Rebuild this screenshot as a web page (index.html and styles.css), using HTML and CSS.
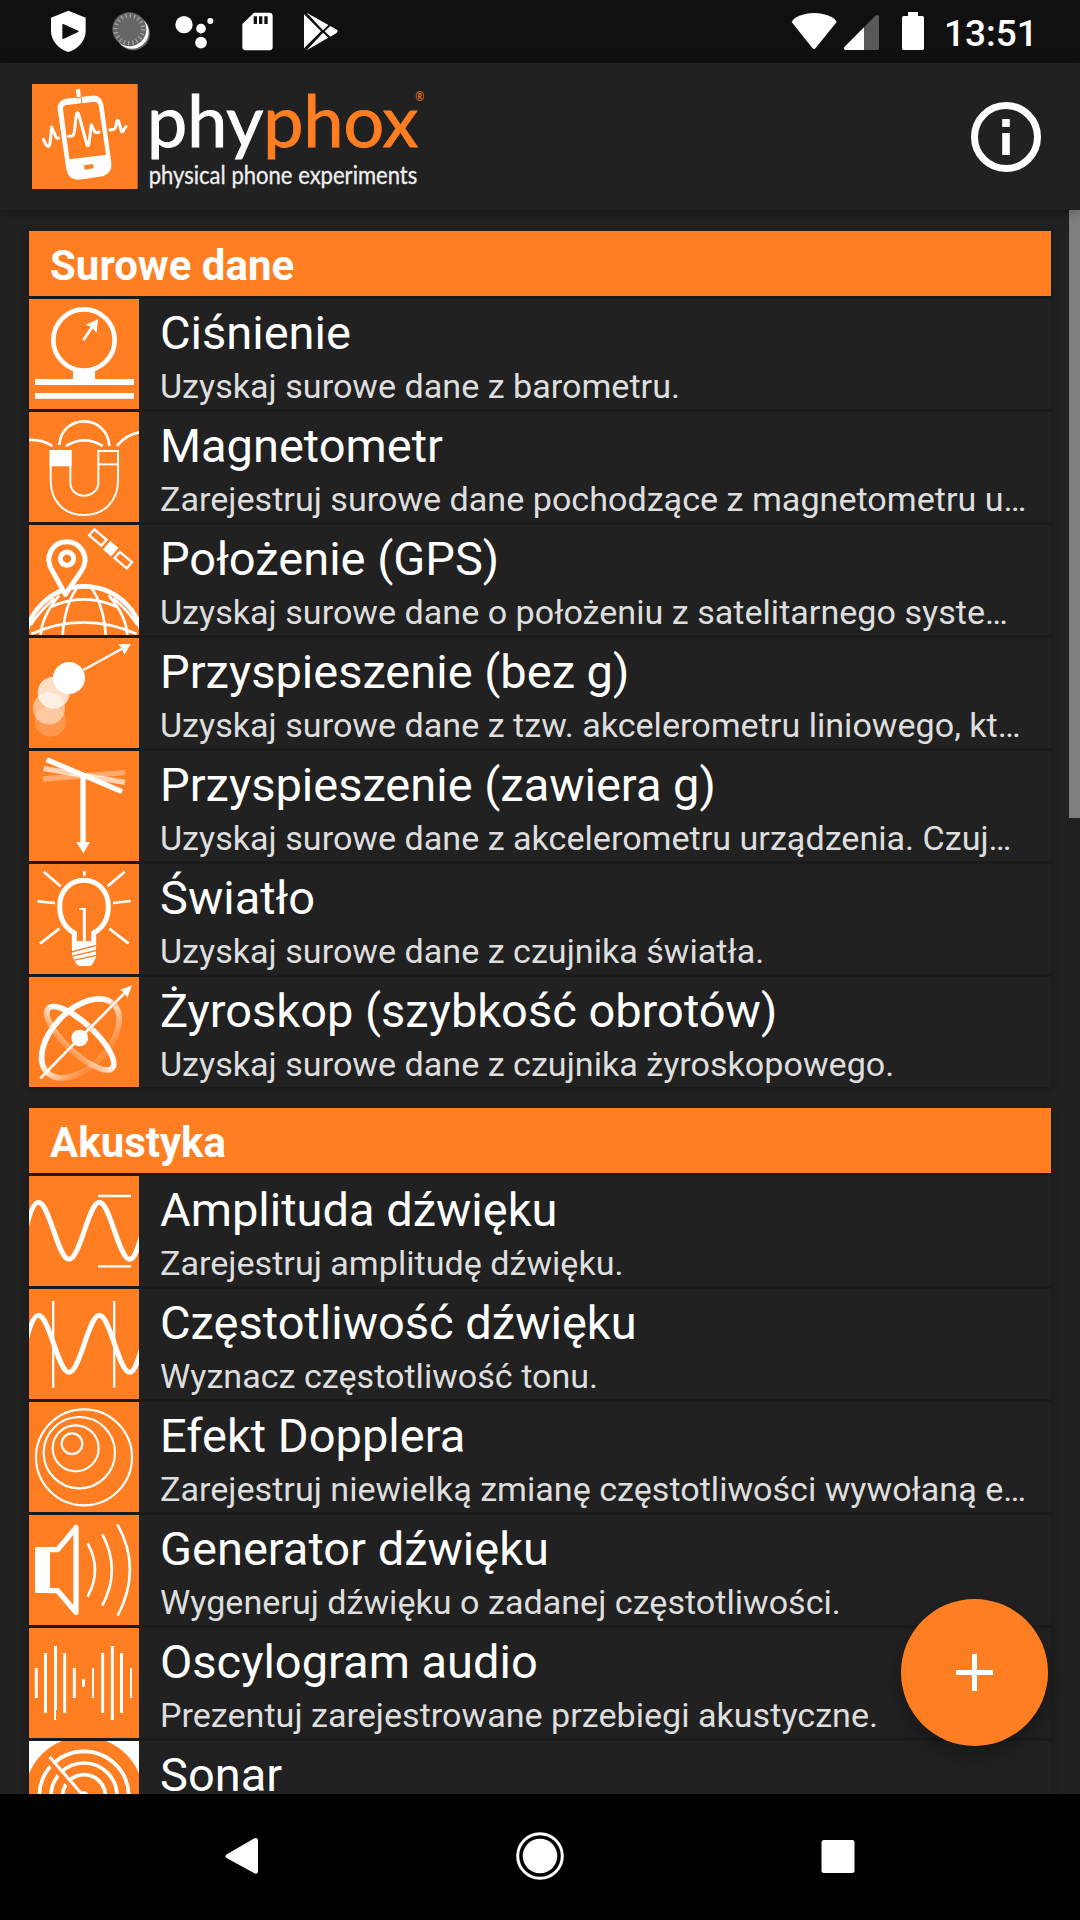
FILE: index.html
```html
<!DOCTYPE html>
<html lang="pl">
<head>
<meta charset="utf-8">
<title>phyphox</title>
<link rel="stylesheet" href="styles.css">
</head>
<body>
<div class="screen">
  <header class="status">
    <div class="status-group">
      <svg class="slot-50" viewBox="150 0 150 189"><path fill="#fff" d="M205 32L257 53V94C257 122 234 148 205 156C176 148 153 122 153 94V53Z"/><path d="M189 74L234 94L189 115Z" fill="#101010" stroke="#101010" stroke-width="4" stroke-linejoin="round"/></svg>
      <svg class="slot-60" viewBox="300 0 180 189"><circle cx="399" cy="100" r="51" fill="#666"/><circle cx="396" cy="96" r="50" fill="#fff"/><circle cx="388" cy="88" r="51" fill="#666"/><circle cx="388" cy="88" r="41" fill="none" stroke="#a9a9a9" stroke-width="13" stroke-dasharray="3.5 9.38"/></svg>
      <svg class="slot-70" viewBox="480 0 210 189" fill="#fff"><circle cx="552" cy="74" r="26"/><circle cx="603" cy="86" r="14.500"/><circle cx="631" cy="63" r="9"/><circle cx="603" cy="128" r="17.500"/></svg>
      <svg class="slot-60" viewBox="690 0 180 189"><path fill="#fff" d="M762 38H808Q818 38 818 48V141Q818 151 808 151H737Q727 151 727 141V72Z"/><path fill="#101010" d="M761 49h10v23h-10zM777 49h10v23h-10zM793 49h10v23h-10z"/></svg>
      <svg class="slot-50" viewBox="870 0 150 189" fill="#fff"><path d="M912 43L963 94L912 145Z"/><path d="M920 38L985 75L969 91Z"/><path d="M920 151L985 113L969 98Z"/><path d="M974 94L991 78L1008 88Q1018 94 1008 100L991 110Z"/></svg>
    </div>
    <div class="status-group">
      <svg class="slot-50" viewBox="90 0 150 189"><path fill="#fff" d="M95 66Q98 57 110 51Q162 27 215 51Q227 57 230 66L167 144Q162 150 157 144Z"/></svg>
      <svg class="slot-50" viewBox="240 0 150 189"><path fill="#595959" d="M312 82L346 47Q352 42 357 48V145Q357 150 352 150H312Z"/><path fill="#fff" d="M312 82V150H256Q250 148 253 141Z"/></svg>
      <svg class="slot-50" viewBox="390 0 150 189"><path fill="#fff" d="M444 36H474V48H487Q492 48 492 53V145Q492 150 487 150H431Q426 150 426 145V53Q426 48 431 48H444Z"/></svg>
      <time class="clock">13:51</time>
    </div>
  </header>

  <div class="appbar">
    <svg class="brand" viewBox="96 252 1182 330">
      <path fill="#ff7e22" d="M96 252h317v315H96z"/>
      <path fill="#fff" fill-rule="evenodd" d="M173 328Q171 302 197 296L275 287Q304 285 310 313L334 489Q337 520 308 529L238 539Q205 541 199 508ZM189 327Q188 317 199 315L279 306Q294 304 296 316L318 464L208 478Z"/>
      <path fill="#ff7e22" d="M229 286L243 284L248 314L235 316ZM252 496L279 492L281 505L254 509Z"/>
      <path fill="#fff" d="M227 269L240 266L244 309L234 311Z"/><path stroke="#ff7e22" stroke-width="3" d="M228 294L246 291"/>
      <path fill="none" stroke="#fff" stroke-width="9" stroke-linejoin="round" stroke-linecap="round" d="M130 418L138 434Q146 446 150 431L155 381L166 407Q169 417 176 414M206 409L216 408Q221 407 223 395L229 343Q233 333 237 346L261 435Q265 440 267 429L274 374L284 395Q287 400 297 396M330 390L342 388Q348 385 350 364Q354 357 357 367L364 394Q369 398 372 387L378 380"/>
      <text x="441" y="440" class="brand-name" textLength="814" lengthAdjust="spacingAndGlyphs"><tspan class="brand-light">phy</tspan><tspan class="brand-orange">phox</tspan></text>
      <text x="446" y="552" class="brand-tag" textLength="806" lengthAdjust="spacingAndGlyphs">physical phone experiments</text>
      <text x="1246" y="304" class="brand-reg" textLength="27" lengthAdjust="spacingAndGlyphs">®</text>
    </svg>
    <svg class="info" viewBox="0 0 72 72"><circle cx="36" cy="36" r="31.500" fill="none" stroke="#fff" stroke-width="7"/><path fill="#fff" d="M32.200 18h7.600v8h-7.600zM32.200 32h7.600v22h-7.600z"/></svg>
  </div>

  <main class="list">
    <section class="card">
      <h2 class="card-title">Surowe dane</h2>
      <article class="row">
        <svg class="icon" viewBox="27 237 330 330"><circle cx="192" cy="360" r="92" fill="none" stroke="#fff" stroke-width="14"/><path fill="#fff" d="M159 446h66v31h117v18H45V477h114zM45 519h297v17H45z"/><path d="M190 361L217 320" stroke="#fff" stroke-width="8"/><path fill="#fff" d="M234 298L197 314L213 320L230 338Z"/></svg>
        <div class="text"><h3>Ciśnienie</h3><p>Uzyskaj surowe dane z barometru.</p></div>
      </article>
      <article class="row">
        <svg class="icon" viewBox="27 576 330 330" fill="none" stroke="#fff" stroke-width="6"><path d="M92 693V781C92 849 137 885 192 885S294 849 294 781V693H235V788C235 811 214 827 192 827S151 811 151 788V693Z"/><path fill="#fff" d="M92 693h60v43H92z"/><path d="M235 733h59"/><path stroke-width="8" d="M118 675C121 628 156 604 193 604S266 632 268 678M138 678Q193 644 248 678M27 660Q66 658 97 678M291 678Q316 645 357 637"/></svg>
        <div class="text"><h3>Magnetometr</h3><p>Zarejestruj surowe dane pochodzące z magnetometru u…</p></div>
      </article>
      <article class="row">
        <svg class="icon" viewBox="27 15 330 330" fill="none" stroke="#fff"><circle cx="192" cy="377" r="178" stroke-width="14"/><path stroke-width="8" d="M88 263Q190 213 296 263M34 342Q190 272 350 342M171 203Q134 255 128 345M214 203Q251 255 257 345M118 226Q66 286 62 345M266 226Q318 286 322 345M32 315Q60 272 104 235M352 315Q324 272 280 235"/><path fill="#ff7e22" stroke-width="15" stroke-linejoin="round" d="M136 223L98 154C70 112 98 65 140 65S213 112 183 154Z"/><circle cx="141" cy="116" r="20" stroke-width="15"/><g transform="translate(272 86) rotate(40)"><path fill="#fff" stroke="none" d="M-16-17h32v34h-32z"/><path stroke-width="7" d="M-75-13h48v24h-48zM27-10h48v24h-48z"/></g></svg>
        <div class="text"><h3>Położenie (GPS)</h3><p>Uzyskaj surowe dane o położeniu z satelitarnego syste…</p></div>
      </article>
      <article class="row">
        <svg class="icon" viewBox="27 354 330 330" fill="#fff"><circle cx="91" cy="603" r="47" opacity=".2"/><circle cx="87" cy="565" r="48" opacity=".48"/><circle cx="101" cy="518" r="48" opacity=".75"/><circle cx="147" cy="474" r="48"/><path d="M190 450L306 386" stroke="#fff" stroke-width="7"/><path d="M332 372L294 373L305 384L313 404Z"/></svg>
        <div class="text"><h3>Przyspieszenie (bez g)</h3><p>Uzyskaj surowe dane z tzw. akcelerometru liniowego, kt…</p></div>
      </article>
      <article class="row">
        <svg class="icon" viewBox="27 18 330 330" fill="none" stroke="#fff" stroke-width="16"><path opacity=".35" d="M69 102L315 83"/><path opacity=".65" d="M71 71L315 112"/><path d="M80 44L306 140"/><path d="M189 91V293"/><path fill="#fff" stroke="none" d="M169 291h41L190 325Z"/></svg>
        <div class="text"><h3>Przyspieszenie (zawiera g)</h3><p>Uzyskaj surowe dane z akcelerometru urządzenia. Czuj…</p></div>
      </article>
      <article class="row">
        <svg class="icon" viewBox="27 357 330 330" fill="none" stroke="#fff"><path stroke-width="15" d="M163 605V564C134 548 119 520 119 484C119 436 153 406 192 406S265 436 265 484C265 520 250 548 221 564V605"/><path fill="#fff" stroke="none" d="M156 589H228V637L218 656Q215 663 207 663H180Q171 663 168 655L156 632Z"/><path stroke="#ff7e22" stroke-width="4" d="M154 621L230 601M154 634L230 616M156 647L230 631"/><path stroke-width="9" d="M193 600V492"/><path stroke-width="6" d="M178 492h19"/><path stroke-width="8" d="M193 378V392M71 380L122 424M314 380L263 424M53 469L105 474M332 468L279 474M60 596L118 551M326 596L268 551"/></svg>
        <div class="text"><h3>Światło</h3><p>Uzyskaj surowe dane z czujnika światła.</p></div>
      </article>
      <article class="row">
        <svg class="icon" viewBox="27 21 330 330"><defs><linearGradient id="ringA" gradientUnits="userSpaceOnUse" x1="170" y1="170" x2="250" y2="250"><stop stop-color="#fff"/><stop offset="1" stop-color="#fff" stop-opacity=".12"/></linearGradient><linearGradient id="ringB" gradientUnits="userSpaceOnUse" x1="180" y1="190" x2="140" y2="230"><stop stop-color="#fff"/><stop offset="1" stop-color="#fff" stop-opacity=".22"/></linearGradient></defs>
        <path fill="none" stroke="url(#ringA)" stroke-width="17" d="M280.700 102.300A143 85 -46 0 1 82 308A143 85 -46 0 1 280.700 102.300Z"/><path fill="none" stroke="url(#ringB)" stroke-width="17" d="M85 115.700A131 44 43 0 1 276.800 294.300A131 44 43 0 1 85 115.700Z"/><circle cx="179" cy="204" r="25" fill="#fff"/><path d="M61 325L183 200" stroke="#fff" stroke-width="8"/><path d="M206 178L316 67" stroke="#ff7e22" stroke-width="14" opacity=".6"/><path d="M188 196L318 65" stroke="#fff" stroke-width="8"/><path fill="#fff" d="M336 46L300 60L314 68L322 83Z"/></svg>
        <div class="text"><h3>Żyroskop (szybkość obrotów)</h3><p>Uzyskaj surowe dane z czujnika żyroskopowego.</p></div>
      </article>
    </section>

    <section class="card">
      <h2 class="card-title">Akustyka</h2>
      <article class="row">
        <svg class="icon" viewBox="27 18 330 330" fill="none" stroke="#fff"><path stroke-width="15" d="M20 165C34 115 45 97 55 97C88 97 114 268 147 268S206 97 238 97S297 268 329 268C341 268 350 245 364 200"/><path stroke-width="7" d="M234 78h99M234 289h99"/></svg>
        <div class="text"><h3>Amplituda dźwięku</h3><p>Zarejestruj amplitudę dźwięku.</p></div>
      </article>
      <article class="row">
        <svg class="icon" viewBox="27 18 330 330" fill="none" stroke="#fff"><path stroke-width="15" d="M20 165C34 115 45 97 55 97C88 97 114 268 147 268S206 97 238 97S297 268 329 268C341 268 350 245 364 200"/><path stroke-width="7" d="M99.500 54v260M282.500 54v260"/></svg>
        <div class="text"><h3>Częstotliwość dźwięku</h3><p>Wyznacz częstotliwość tonu.</p></div>
      </article>
      <article class="row">
        <svg class="icon" viewBox="27 21 330 330" fill="none" stroke="#fff" stroke-width="6.500"><circle cx="192" cy="187" r="144"/><circle cx="178" cy="173" r="107"/><circle cx="167" cy="160" r="69"/><circle cx="156" cy="146" r="31"/></svg>
        <div class="text"><h3>Efekt Dopplera</h3><p>Zarejestruj niewielką zmianę częstotliwości wywołaną e…</p></div>
      </article>
      <article class="row">
        <svg class="icon" viewBox="27 360 330 330" fill="none" stroke="#fff"><path fill="#fff" stroke="none" d="M50 456h40v138H50q-5 0-5-5V461q0-5 5-5z"/><path stroke-width="16" stroke-linejoin="round" d="M82 464H113L168 398V652L113 587H82"/><path stroke-width="8" d="M203 445Q247 524 203 605M247 418Q304 524 247 632M292 388Q367 520 293 662"/></svg>
        <div class="text"><h3>Generator dźwięku</h3><p>Wygeneruj dźwięku o zadanej częstotliwości.</p></div>
      </article>
      <article class="row">
        <svg class="icon" viewBox="27 24 330 330" fill="none" stroke="#fff" stroke-width="9"><path d="M49 144v90M76.500 99v180M106.500 78v192M134 99v180M163 144v90M190.500 178v22M248 99v180M277 78v222M304.500 99v180"/><path stroke-width="6" d="M105 268v32M219 144v90M333 144v90"/></svg>
        <div class="text"><h3>Oscylogram audio</h3><p>Prezentuj zarejestrowane przebiegi akustyczne.</p></div>
      </article>
      <article class="row">
        <svg class="icon" viewBox="27 363 330 330" fill="none" stroke="#fff" stroke-width="11"><path fill="#fff" stroke="none" d="M27 363h330v330H27z"/><circle cx="192" cy="528" r="178" fill="#ff7e22" stroke="none"/><circle cx="192" cy="528" r="134"/><circle cx="192" cy="528" r="99"/><circle cx="192" cy="528" r="64"/><circle cx="192" cy="528" r="14" fill="#fff" stroke="none"/><path stroke="#ff7e22" stroke-width="16" d="M85 421L185 535"/><path stroke-width="9" d="M89 411L188 525"/></svg>
        <div class="text"><h3>Sonar</h3></div>
      </article>
    </section>
    <div class="scrollbar"></div>
    <button class="fab" aria-label="Dodaj"><svg viewBox="0 0 37 37"><path fill="#fff" d="M16 0h5v16h16v5H21v16h-5V21H0v-5h16z"/></svg></button>
  </main>

  <nav class="navbar">
    <svg viewBox="0 0 50 50"><path fill="#fff" d="M9.500 23.500L37 7.500Q41 6 41 10V40Q41 44 37 42L9.500 27Q7.500 25 9.500 23.500Z"/></svg>
    <svg viewBox="0 0 50 50"><circle cx="25" cy="25" r="22.300" fill="none" stroke="#fff" stroke-width="3"/><circle cx="25" cy="25" r="17.300" fill="#fff"/></svg>
    <svg viewBox="0 0 50 50"><rect x="8.500" y="9" width="33" height="33" rx="2.500" fill="#fff"/></svg>
  </nav>
</div>
</body>
</html>
```
FILE: styles.css
```css
* { box-sizing: border-box; margin: 0; padding: 0; }
body { background: #000; font-family: Roboto, "Noto Sans", sans-serif; color: #fff; }
svg { display: block; flex: none; }

.screen { width: 1080px; height: 1920px; display: flex; flex-direction: column; overflow: hidden; }

.status { height: 63px; flex: none; background: #101010; display: flex; justify-content: space-between; padding: 0 40px 0 50px; }
.status-group { display: flex; align-items: center; }
.status-group svg { height: 63px; }
.slot-50 { width: 50px; }
.slot-60 { width: 60px; }
.slot-70 { width: 70px; }
.clock { width: 100px; font-size: 37px; font-weight: 500; line-height: 63px; padding: 3px 0 0 4px; white-space: nowrap; }

.appbar { position: relative; z-index: 2; height: 147px; flex: none; background: #212121; box-shadow: 0 2px 12px rgba(0, 0, 0, .3); display: flex; justify-content: space-between; align-items: flex-start; padding: 21px 38px 0 32px; }
.brand { width: 394px; height: 110px; overflow: visible; }
.brand-name { font-family: Lato, "Noto Sans", sans-serif; font-size: 214px; stroke-width: 3px; }
.brand-light { fill: #fff; stroke: #fff; }
.brand-orange { fill: #ff7e22; stroke: #ff7e22; }
.brand-tag { font-family: Lato, "Noto Sans", sans-serif; font-size: 76px; fill: #eee; stroke: #eee; stroke-width: 1px; }
.brand-reg { font-family: "Noto Sans", sans-serif; font-size: 36px; fill: #ff7e22; }
.info { width: 72px; height: 72px; margin-top: 17px; }

.list { position: relative; flex: 1; min-height: 0; overflow: hidden; background: #212121; padding: 21px 29px 0; display: flex; flex-direction: column; gap: 21px; }
.card { flex: none; display: flex; flex-direction: column; gap: 3px; background: #1b1b1b; box-shadow: 0 2px 8px rgba(0, 0, 0, .3); }
.card-title { height: 65px; background: #ff7e22; font-size: 42px; font-weight: 700; line-height: 65px; padding: 2px 0 0 21px; }
.row { height: 110px; display: flex; gap: 21px; background: #212121; }
.icon { width: 110px; height: 110px; background: #ff7e22; overflow: hidden; }
.text { flex: 1; min-width: 0; padding-top: 5px; white-space: nowrap; }
.text h3 { font-size: 47px; font-weight: 400; line-height: 57px; }
.text p { font-size: 34.125px; line-height: 42px; padding-top: 4px; color: #dedede; }

.scrollbar { position: absolute; top: 0; right: 0; width: 11px; height: 608px; background: #7f7f7f; }
.fab { position: absolute; right: 32px; bottom: 48px; width: 147px; height: 147px; border: 0; border-radius: 50%; background: #ff7e22; box-shadow: 0 10px 22px rgba(0, 0, 0, .3); display: flex; align-items: center; justify-content: center; }
.fab svg { width: 37px; height: 37px; }

.navbar { height: 126px; flex: none; background: #000; display: flex; justify-content: space-between; padding: 37px 217px 0; }
.navbar svg { width: 50px; height: 50px; }
```
